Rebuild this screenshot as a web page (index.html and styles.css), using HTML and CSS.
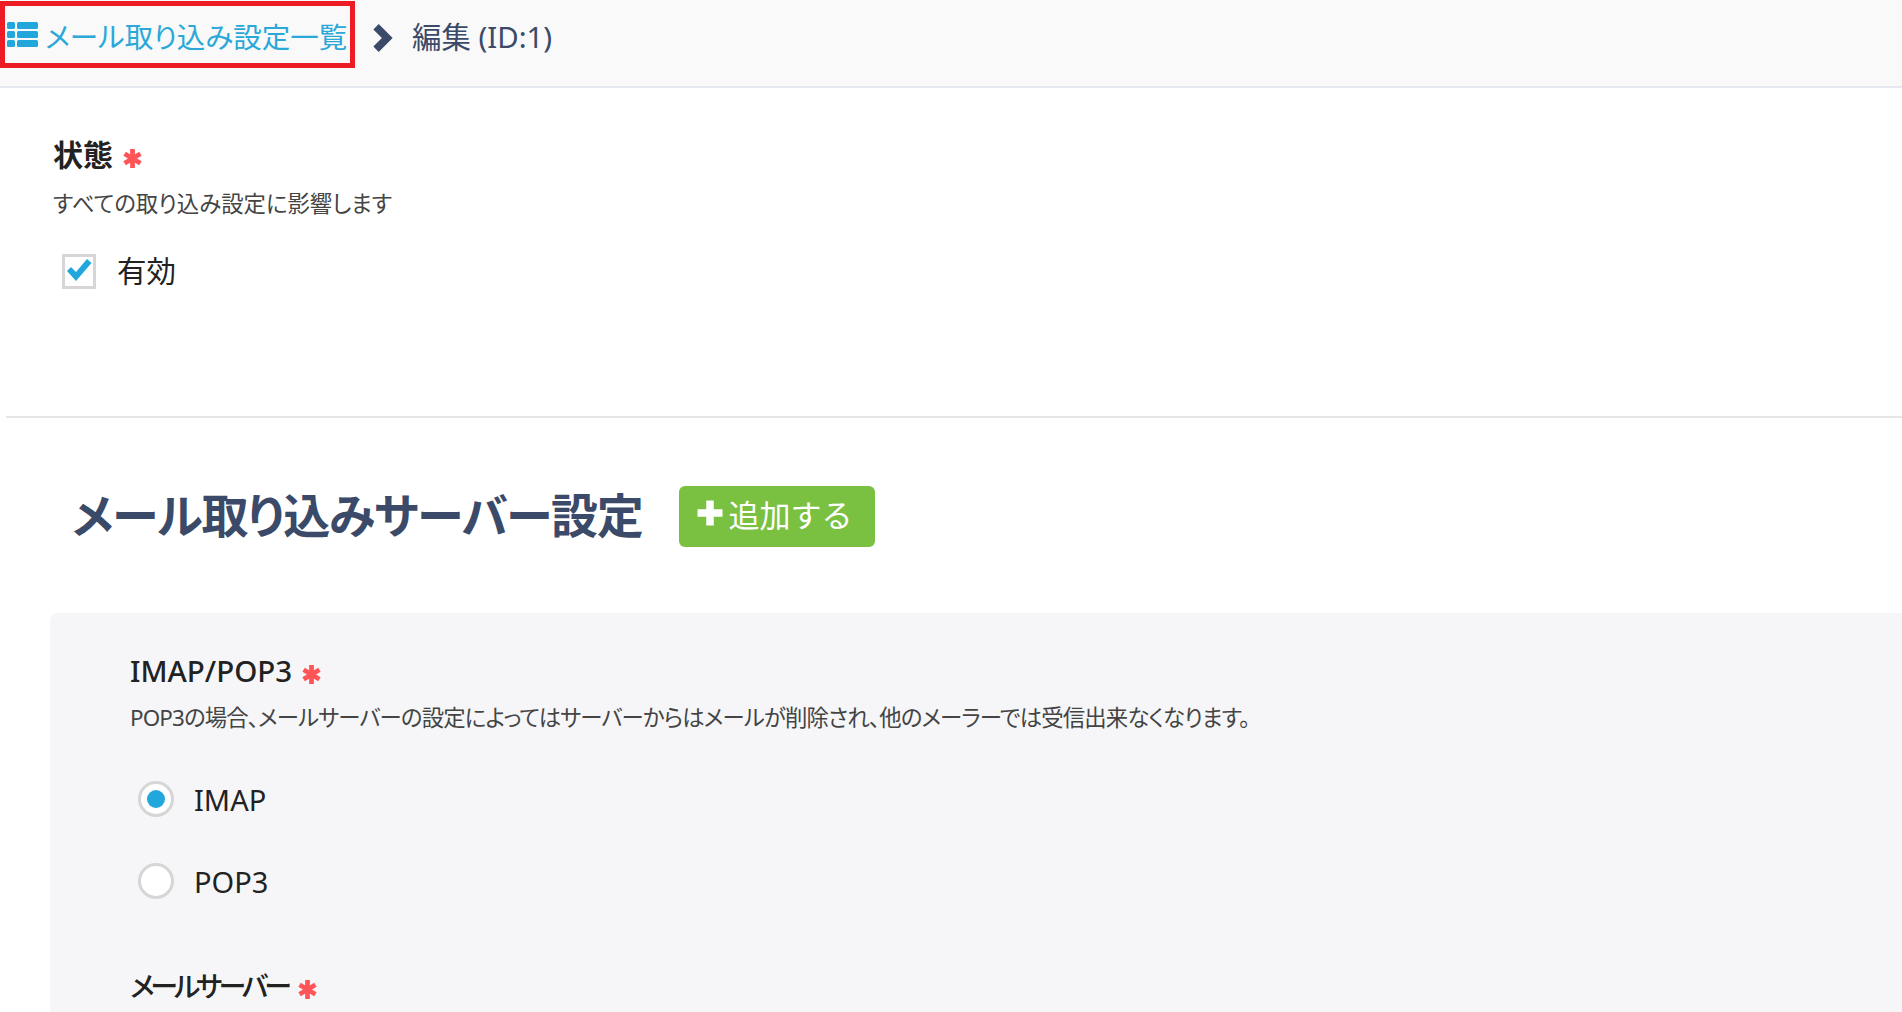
FILE: index.html
```html
<!DOCTYPE html>
<html lang="ja">
<head>
  <meta charset="UTF-8" />
  <title>編集 (ID:1)</title>
  <link rel="stylesheet" href="styles.css">
</head>
<body>
  <header class="topbar">
    <a class="back-link" href="#">
      <svg class="list-icon" viewBox="0 0 31 25" aria-hidden="true">
        <rect x="0" y="0" width="8" height="7" rx="1.5"/>
        <rect x="0" y="9" width="8" height="7" rx="1.5"/>
        <rect x="0" y="18" width="8" height="7" rx="1.5"/>
        <rect x="10" y="0" width="21" height="7" rx="1.5"/>
        <rect x="10" y="9" width="21" height="7" rx="1.5"/>
        <rect x="10" y="18" width="21" height="7" rx="1.5"/>
      </svg>
      <span class="back-text">メール取り込み設定一覧</span>
    </a>
    <svg class="crumb-arrow" viewBox="0 0 20 28" aria-hidden="true">
      <path d="M1 6 6 1 19 14 6 27 1 22 9 14Z"/>
    </svg>
    <span class="crumb-current">編集 (ID:1)</span>
  </header>

  <section class="status">
    <h3 class="field-label">状態
      <svg class="required" viewBox="0 0 18 18" aria-hidden="true"><path d="M9 0v18M1.500 4.500l15 9M16.500 4.500l-15 9"/></svg>
    </h3>
    <p class="field-help">すべての取り込み設定に影響します</p>
    <label class="check-row">
      <span class="checkbox">
        <svg viewBox="0 0 26 24" aria-hidden="true"><path d="M1 13 5 9 10 14 21 1 25.500 5 10 23Z"/></svg>
      </span>
      有効
    </label>
  </section>

  <hr class="divider">

  <div class="server-head">
    <h2>メール取り込みサーバー設定</h2>
    <button class="add-btn" type="button">
      <svg viewBox="0 0 24 24" aria-hidden="true"><path d="M9 2h6v7h7v6h-7v7H9v-7H2V9h7Z"/></svg>
      追加する
    </button>
  </div>

  <section class="server-panel">
    <h3 class="field-label imap-label">IMAP/POP3
      <svg class="required" viewBox="0 0 18 18" aria-hidden="true"><path d="M9 0v18M1.500 4.500l15 9M16.500 4.500l-15 9"/></svg>
    </h3>
    <p class="field-help">POP3の場合、メールサーバーの設定によってはサーバーからはメールが削除され、他のメーラーでは受信出来なくなります。</p>
    <div class="radio-row"><span class="radio checked"></span>IMAP</div>
    <div class="radio-row"><span class="radio"></span>POP3</div>
    <h3 class="field-label server-label">メールサーバー
      <svg class="required" viewBox="0 0 18 18" aria-hidden="true"><path d="M9 0v18M1.500 4.500l15 9M16.500 4.500l-15 9"/></svg>
    </h3>
  </section>
</body>
</html>
```

FILE: styles.css
```css
html, body {
  height: 1012px;
  overflow: hidden;
}

body {
  margin: 0;
  background: #fff;
  color: #222;
  font-family: "Noto Sans", "Noto Sans CJK JP", sans-serif;
  font-feature-settings: "palt";
}

.topbar {
  display: flex;
  align-items: flex-start;
  box-sizing: border-box;
  height: 88px;
  padding-top: 1px;
  background: #f9f9fa;
  border-bottom: 2px solid #e6e8f1;
  color: #3a4a68;
}

.back-link {
  display: flex;
  align-items: center;
  flex-shrink: 0;
  box-sizing: border-box;
  width: 355px;
  height: 67px;
  padding-left: 2px;
  border: 5px solid #ed1c24;
  color: #2ba8d8;
  font-size: 28.500px;
  text-decoration: none;
  white-space: nowrap;
}

.back-text {
  margin-top: 2px;
}

.list-icon {
  flex-shrink: 0;
  width: 31px;
  height: 25px;
  margin-right: 7px;
  fill: #22a7dc;
}

.crumb-arrow {
  flex-shrink: 0;
  width: 22px;
  height: 30px;
  margin: 22px 18px 0 17px;
  fill: #3a4a68;
}

.crumb-current {
  font-size: 29.400px;
  line-height: 72px;
}

.status {
  box-sizing: border-box;
  height: 328px;
  padding: 47px 0 0 53px;
}

.field-label {
  display: flex;
  align-items: center;
  gap: 10px;
  margin: 0;
  font-size: 30px;
  line-height: 40px;
  font-weight: 600;
}

.imap-label {
  font-size: 29.500px;
  font-weight: 500;
}

.server-label {
  margin-top: 44px;
  font-size: 28px;
  font-weight: 500;
  letter-spacing: -4px;
}

.required {
  flex-shrink: 0;
  width: 19px;
  height: 19px;
  margin-top: 6px;
  fill: none;
  stroke: #ff5558;
  stroke-width: 4.500px;
}

.field-help {
  margin: 13px 0 0;
  font-size: 22.400px;
  line-height: 32px;
  color: #444;
}

.check-row {
  display: flex;
  align-items: center;
  gap: 21px;
  margin: 33px 0 0 9px;
  font-size: 29.500px;
  line-height: 36px;
}

.checkbox {
  display: flex;
  align-items: center;
  justify-content: center;
  box-sizing: border-box;
  width: 34px;
  height: 35px;
  border: 3px solid #d6d6d6;
  background: #fff;
}

.checkbox svg {
  flex-shrink: 0;
  width: 26px;
  height: 24px;
  margin-top: -3px;
  fill: #22a7dc;
}

.divider {
  height: 2px;
  margin: 0 0 0 6px;
  border: none;
  background: #e6e6e6;
}

.server-head {
  display: flex;
  align-items: center;
  box-sizing: border-box;
  height: 195px;
  padding-left: 72px;
}

.server-head h2 {
  margin: 0 36px 6px 0;
  font-size: 47px;
  font-weight: 700;
  letter-spacing: -1.200px;
  color: #3a4a68;
  white-space: nowrap;
}

.add-btn {
  display: flex;
  align-items: center;
  gap: 4px;
  width: 196px;
  height: 61px;
  margin-top: 2px;
  padding: 0 0 7px 16px;
  border: none;
  border-radius: 6px;
  background: #7ac142;
  color: #fff;
  font: inherit;
  font-size: 31px;
  font-feature-settings: normal;
}

.add-btn svg {
  flex-shrink: 0;
  width: 30px;
  height: 30px;
  fill: #fff;
}

.server-panel {
  height: 400px;
  margin-left: 50px;
  padding: 38px 0 0 80px;
  border-top-left-radius: 8px;
  background: #f6f6f8;
}

.server-panel .field-help {
  margin: 11px 0 24px;
  letter-spacing: -0.850px;
}

.radio-row {
  display: flex;
  align-items: center;
  gap: 20px;
  height: 82px;
  margin-left: 8px;
  font-size: 29px;
}

.radio {
  display: flex;
  align-items: center;
  justify-content: center;
  box-sizing: border-box;
  width: 36px;
  height: 36px;
  border: 3px solid #d6d6d6;
  border-radius: 50%;
  background: #fff;
}

.radio.checked::after {
  content: "";
  width: 18px;
  height: 18px;
  border-radius: 50%;
  background: #22a7dc;
}
```
